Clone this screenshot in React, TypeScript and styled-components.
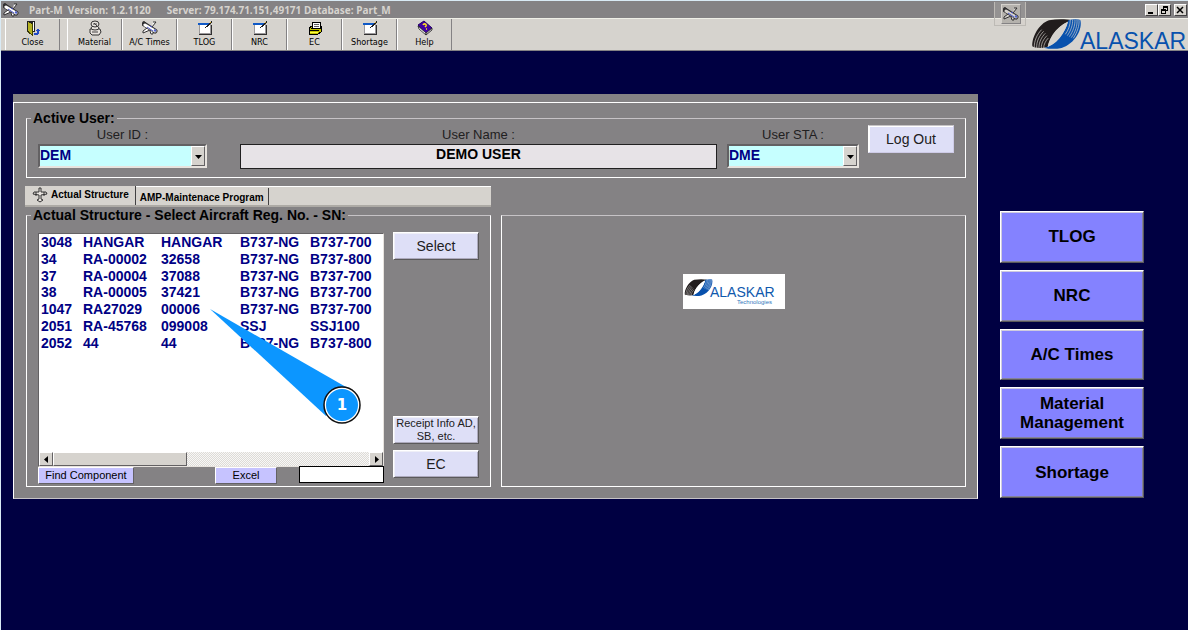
import React from "react";
import styled, { createGlobalStyle } from "styled-components";

const face = "#d6d3ce";
const grey = "#848284";
const navy = "#000042";
const sans = `"Liberation Sans", Arial, sans-serif`;
const ui = `"DejaVu Sans Condensed", Tahoma, sans-serif`;

const Global = createGlobalStyle`
  * { box-sizing: border-box; }
  html { background: ${navy}; }
  body { margin: 0; font-family: ${sans}; color: #000; }
  button, input, select { font-family: inherit; margin: 0; border-radius: 0; }
`;

const Page = styled.div`
  min-height: 100vh;
  background: ${navy};
  border-top: 1px solid #d9eaf5;
  border-left: 1px solid #d9eaf5;
`;

const TitleBar = styled.header`
  display: flex;
  align-items: center;
  height: 17px;
  padding-left: 2px;
  background: ${grey};
  color: ${face};
  font: bold 10px "Noto Sans", Tahoma, sans-serif;
  white-space: pre;
`;
const TitleText = styled.span`
  margin-left: 10px;
  flex: 1;
`;
const ServerText = styled.span`
  margin-left: 16px;
`;
const WinControls = styled.div`
  display: flex;
  margin-right: 1px;
`;
const WinButton = styled.button<{ $gap?: boolean }>`
  display: flex;
  padding: 0;
  width: 13px;
  height: 12px;
  margin-left: ${(p) => (p.$gap ? 3 : 0)}px;
  background: ${face};
  border: 1px solid;
  border-color: #fff #424142 #424142 #fff;
`;

const Toolbar = styled.nav`
  position: relative;
  display: flex;
  height: 33px;
  padding-left: 4px;
  background: ${face};
  border-top: 1px solid #efefe7;
  border-bottom: 1px solid ${grey};
`;
const ToolButton = styled.button<{ $last?: boolean }>`
  display: flex;
  flex-direction: column;
  align-items: center;
  width: 55px;
  padding: 1px 0 0 1px;
  margin-right: ${(p) => (p.$last ? 7 : 0)}px;
  background: none;
  border: 0;
  border-right: 1px solid ${grey};
  box-shadow: inset 1px 0 #fff;
  font: 9px/12px ${ui};
  white-space: nowrap;
`;
const ToolLogo = styled.div`
  margin-left: auto;
  height: 32px;
`;
const FloatingTool = styled.div`
  position: absolute;
  right: 162px;
  top: -17px;
  width: 32px;
  height: 24px;
  padding: 2px 5px 0 6px;
  background: rgba(214, 211, 206, 0.2);
  border: 1px solid #bdbab5;
  border-width: 0 1px 1px;
`;
const FloatingButton = styled.button`
  display: flex;
  padding: 1px;
  width: 20px;
  height: 20px;
  background: #b5b2ad;
  border: 1px solid;
  border-color: #d6d3ce #848284 #848284 #d6d3ce;
`;

const Workspace = styled.main`
  display: flex;
  align-items: flex-start;
  gap: 22px;
  padding: 43px 44px 0 12px;
`;
const Panel = styled.section`
  flex: 1;
  border-top: 8px solid ${grey};
  background: ${grey};
`;
const PanelBody = styled.div`
  border: 1px solid #fff;
  border-bottom-color: #c6c3c6;
  padding: 7px 11px 11px 12px;
  height: 397px;
`;
const Group = styled.fieldset`
  min-width: 0;
  margin: 0;
  border: 1px solid #fff;
  border-top-color: #c6c3c6;
  padding: 0;
`;
const Legend = styled.legend`
  margin-left: 4px;
  padding: 0 2px;
  font: bold 14px/16px ${sans};
`;
const UserGroup = styled(Group)`
  height: 68px;
`;
const UserRow = styled.div`
  display: flex;
  align-items: flex-start;
  padding: 0 11px;
`;
const Field = styled.div<{ $grow?: boolean; $left?: number; $width?: number }>`
  display: flex;
  flex-direction: column;
  ${(p) => (p.$grow ? "flex: 1;" : `width: ${p.$width}px;`)}
  margin-left: ${(p) => p.$left ?? 0}px;
`;
const FieldLabel = styled.label`
  font: 13px/18px ${sans};
  color: #212021;
  text-align: center;
`;
const ComboBox = styled.div`
  display: flex;
  position: relative;
  height: 24px;
  border: 2px solid;
  border-color: #636163 #e7e3de #e7e3de #636163;
`;
const Combo = styled.select`
  appearance: none;
  flex: 1;
  min-width: 0;
  border: 0;
  padding: 0 18px 2px 0;
  background: #c6ffff;
  color: #000084;
  font: bold 14px ${sans};
`;
const ComboArrow = styled.span`
  position: absolute;
  right: 0;
  top: 0;
  bottom: 0;
  width: 14px;
  display: grid;
  place-items: center;
  pointer-events: none;
  background: ${face};
  border: 1px solid;
  border-color: #fff #636163 #636163 #fff;
`;
const NameInput = styled.input`
  height: 25px;
  width: 100%;
  padding: 0 0 5px;
  text-align: center;
  background: #e7e3e7;
  border: 1px solid #212021;
  font: bold 14px ${sans};
`;

const PushButton = styled.button<{ $size?: number }>`
  width: 86px;
  height: 28px;
  padding: 0;
  background: #dedff7;
  border: 1px solid;
  border-color: #fff #5a595a #5a595a #fff;
  box-shadow: inset 1px 1px #efeff7, inset -1px -1px #adaabd;
  color: #212021;
  font: ${(p) => p.$size ?? 14}px/13px ${sans};
`;
const LogOut = styled(PushButton)`
  margin: -1px 0 0 9px;
  border-color: #c6c3c6 #cecbe7 #cecbe7 #fff;
  box-shadow: inset 1px 1px #fff;
`;

const Columns = styled.div`
  display: grid;
  grid-template-columns: 1fr 1fr;
  gap: 10px;
`;
const TabStrip = styled.div`
  display: flex;
  align-items: flex-end;
  height: 21px;
  margin: 8px 0 0 -1px;
  width: calc(50% - 4px);
  background: ${face};
  border-bottom: 2px solid #adaaa5;
  border-top: 1px solid #fff;
`;
const Tab = styled.button<{ $active?: boolean }>`
  display: flex;
  align-items: center;
  gap: 3px;
  height: ${(p) => (p.$active ? 19 : 17)}px;
  padding: ${(p) => (p.$active ? "0 6px 2px 7px" : "1px 4px 0 4px")};
  background: ${face};
  border: 0;
  border-right: 1px solid #424142;
  font: bold 10px ${sans};
  white-space: nowrap;
`;

const ListGroup = styled(Group)`
  height: 280px;
`;
const ListLayout = styled.div`
  display: flex;
  gap: 9px;
  height: 263px;
  padding: 10px 11px 8px;
`;
const ListColumn = styled.div`
  flex: 1;
  min-width: 0;
`;
const ListBox = styled.div`
  position: relative;
  display: flex;
  flex-direction: column;
  justify-content: space-between;
  height: 234px;
  background: #fff;
  border: 1px solid;
  border-color: #636163 #e7e3de #e7e3de #636163;
`;
const Table = styled.table`
  width: 100%;
  height: 117px;
  border-collapse: collapse;
  table-layout: fixed;
  color: #000084;
  font: bold 14px/16px ${sans};
  white-space: nowrap;
`;
const Cell = styled.td`
  padding: 0 0 0 2px;
`;
const ScrollBar = styled.div`
  display: flex;
  height: 14px;
  background: repeating-conic-gradient(#f7f7f7 0 25%, #dedbd6 0 50%) 0 0 / 2px 2px;
`;
const ScrollArrow = styled.button`
  display: grid;
  place-items: center;
  width: 14px;
  padding: 0;
  background: ${face};
  border: 1px solid;
  border-color: #fff #636163 #636163 #fff;
`;
const Thumb = styled.div`
  width: 134px;
  margin-right: auto;
  background: ${face};
  border: 1px solid;
  border-color: #fff #636163 #636163 #fff;
`;
const ListFooter = styled.div`
  display: flex;
  align-items: flex-start;
  gap: 22px;
`;
const SmallButton = styled.button<{ $width: number; $end?: boolean }>`
  width: ${(p) => p.$width}px;
  margin-left: ${(p) => (p.$end ? "auto" : "0")};
  height: 17px;
  padding: 0;
  background: #c6c3ff;
  border: 1px solid;
  border-color: #fff #636163 #636163 #fff;
  font: 11px/13px ${sans};
`;
const FindInput = styled.input`
  width: 85px;
  height: 17px;
  margin-top: -1px;
  border: 1px solid #000;
  background: #fff;
  font: 11px ${sans};
  z-index: 1;
`;
const SideButtons = styled.div`
  display: flex;
  flex-direction: column;
  gap: 6px;
  margin-top: -1px;
`;
const Spacer = styled.div`
  flex: 1;
`;
const PreviewGroup = styled(Group)`
  display: grid;
  place-items: center;
  margin-top: 8px;
  padding-bottom: 119px;
  height: 272px;
`;
const LogoCard = styled.div`
  width: 102px;
  height: 35px;
  background: #fff;
`;
const Callout = styled.svg`
  position: absolute;
  left: 171px;
  top: 75px;
  pointer-events: none;
`;

const SideNav = styled.nav`
  display: flex;
  flex-direction: column;
  gap: 7px;
  width: 144px;
  height: 287px;
  margin-top: 117px;
`;
const NavButton = styled.button`
  flex: 1;
  padding: 0 10px;
  background: #8482ff;
  border: 1px solid;
  border-color: #fff #5a595a #5a595a #fff;
  box-shadow: inset 1px 1px #cecbde, inset -1px -1px #84829c;
  font: bold 17px/19px ${sans};
`;

const Plane = ({ size = 16, body = "#fff" }: { size?: number; body?: string }) => (
  <svg width={size} height={size} viewBox="0 0 16 16" fill="none" aria-hidden="true">
    <path d="M11 2h3l-4 5M5 8l-4 3v2l7-3M1 2l2 0 3 3M2 5L1 3" stroke="#313031" strokeWidth="1" fill={body} />
    <path d="M2 4L13 11" stroke="#313031" strokeWidth="5" strokeLinecap="round" />
    <path d="M3 5L13 11" stroke={body} strokeWidth="3" strokeLinecap="round" />
    <path d="M5 7l6 4M8 6l2 1" stroke="#4a55c6" />
    <path d="M8 11l1 3h2l0-2" fill={body} stroke="#313031" />
    <path d="M12 10l2 1" stroke="#5265ce" strokeWidth="2" />
  </svg>
);
const Door = () => (
  <svg width="16" height="16" viewBox="0 0 16 16" shapeRendering="crispEdges" aria-hidden="true">
    <path d="M2 1h8v11H2z" fill="#212021" />
    <path d="M8 2h1v9H8z" fill="#fff" />
    <path d="M3 2l4 2v10l-4-3z" fill="#b5b221" />
    <path d="M7 3v12L2 11" fill="none" stroke="#424100" />
    <path d="M9 14v-1h3v-2h-2l3-2 2 2h-1v3l-2 1H9z" fill="#2149c6" />
  </svg>
);
const Parts = () => (
  <svg width="16" height="16" viewBox="0 0 16 16" aria-hidden="true">
    <g fill="#e7e3de" stroke="#313031">
      <path d="M3 9h10l1 3-2 3H5l-2-2z" />
      <ellipse cx="8" cy="8" rx="4" ry="2" />
      <ellipse cx="8" cy="4" rx="4" ry="3" />
    </g>
    <path d="M6 4h4M5 12h6M7 3l3 3" stroke="#424142" />
  </svg>
);
const Note = () => (
  <svg width="16" height="16" viewBox="0 0 16 16" shapeRendering="crispEdges" aria-hidden="true">
    <path d="M2 4h11v9H2z" fill="#fff" stroke="#9c9a9c" />
    <path d="M1 3h12v2H1z" fill="#1059c6" />
    <path d="M14 5v9H2" fill="none" stroke="#313031" />
    <path d="M8 8l1-2 5-5 1 1-5 5z" fill="#212021" />
    <path d="M13 3l1-1" stroke="#c6a221" />
  </svg>
);
const Printer = () => (
  <svg width="16" height="16" viewBox="0 0 16 16" shapeRendering="crispEdges" aria-hidden="true">
    <path d="M2 8l3-2h9v6l-3 2H2z" fill="#c6c300" stroke="#000" />
    <path d="M5 8l1-6h7v6z" fill="#fff" stroke="#000" />
    <path d="M7 4h5M7 6h5" stroke="#636163" />
    <path d="M2 10h10" stroke="#000" />
    <path d="M3 12h8" stroke="#ffff42" />
  </svg>
);
const Book = () => (
  <svg width="16" height="16" viewBox="0 0 16 16" aria-hidden="true">
    <path d="M1 5l6-4 8 7-6 6z" fill="#4200a5" stroke="#210063" />
    <path d="M1 6l8 7v2L2 9z" fill="#fff" stroke="#212021" strokeWidth=".8" />
    <path d="M9 13l6-5v2l-6 5z" fill="#c6c3c6" stroke="#212021" strokeWidth=".8" />
    <path d="M6 5c1-2 4-1 3 1l-1 1M9 9h1" fill="none" stroke="#ffe321" strokeWidth="1.500" />
  </svg>
);
const CrossPlane = () => (
  <svg width="16" height="16" viewBox="0 0 16 16" aria-hidden="true">
    <path d="M7 1h2v4h5l1 2-6 1v4l2 1-3 2-3-2 2-1V8L1 7l1-2h5z" fill="#e7e3de" stroke="#313031" />
    <path d="M4 5v4M12 5v4" stroke="#313031" />
  </svg>
);
const Triangle = ({ dir }: { dir: "left" | "right" | "down" }) => (
  <svg width="7" height="7" viewBox="0 0 7 7" aria-hidden="true">
    <path d={{ left: "M5 0v7L1 3.500z", right: "M2 0v7l4-3.500z", down: "M0 2h7L3.500 6z" }[dir]} />
  </svg>
);

const Swirl = ({ hole }: { hole: string }) => (
  <g>
    <path d="M4 82C2 55 24 14 54 4C78 0 104 0 122 4C86 14 56 50 50 84C32 88 12 88 4 82Z" fill="#211c1c" />
    <path d="M148 3C156 30 132 74 92 87C74 91 54 90 40 87C76 80 102 44 112 4C126 0 140 0 148 3Z" fill="#0851ad" />
    <path d="M50 84C54 60 76 24 111 8C104 38 80 68 50 84Z" fill={hole} />
    <g fill="none" stroke={hole} strokeWidth="2">
      <path d="M10 86C9 66 18 46 32 32" />
      <path d="M17 87C16 68 25 50 38 37" />
      <path d="M24 88C23 70 32 54 43 43" />
      <path d="M31 88C30 73 38 60 48 50" />
      <path d="M38 88C38 76 44 66 52 57" />
      <path d="M118 3C118 18 112 34 103 46" />
      <path d="M125 2C126 18 119 36 109 50" />
      <path d="M132 2C133 18 126 38 115 53" />
      <path d="M138 2C140 18 133 40 121 56" />
      <path d="M144 3C146 18 139 40 127 58" />
    </g>
  </g>
);
const BigLogo = () => (
  <svg width="157" height="32" viewBox="0 0 157 32" overflow="visible" role="img" aria-label="Alaskar">
    <g transform="scale(.333)"><Swirl hole={face} /></g>
    <text x="49" y="30" fontFamily="Liberation Sans, Arial, sans-serif" fontSize="23" fill="#0851ad">ALASKAR</text>
  </svg>
);
const SmallLogo = () => (
  <svg width="102" height="35" viewBox="0 0 102 35" role="img" aria-label="Alaskar Technologies">
    <g transform="translate(1 5) scale(.19)"><Swirl hole="#fff" /></g>
    <text x="27" y="23" fontFamily="Liberation Sans, Arial, sans-serif" fontSize="14" fill="#1059ad">ALASKAR</text>
    <text x="54" y="30" fontFamily="Liberation Sans, Arial, sans-serif" fontSize="6" fill="#3179bd">Technologies</text>
  </svg>
);

const tools: [string, React.ReactNode][] = [
  ["Close", <Door />],
  ["Material", <Parts />],
  ["A/C Times", <Plane />],
  ["TLOG", <Note />],
  ["NRC", <Note />],
  ["EC", <Printer />],
  ["Shortage", <Note />],
  ["Help", <Book />],
];
const aircraft = [
  ["3048", "HANGAR", "HANGAR", "B737-NG", "B737-700"],
  ["34", "RA-00002", "32658", "B737-NG", "B737-800"],
  ["37", "RA-00004", "37088", "B737-NG", "B737-700"],
  ["38", "RA-00005", "37421", "B737-NG", "B737-700"],
  ["1047", "RA27029", "00006", "B737-NG", "B737-700"],
  ["2051", "RA-45768", "099008", "SSJ", "SSJ100"],
  ["2052", "44", "44", "B737-NG", "B737-800"],
];
const sections = ["TLOG", "NRC", "A/C Times", "Material Management", "Shortage"];

const ComboField = ({ id, value }: { id: string; value: string }) => (
  <ComboBox>
    <Combo id={id} defaultValue={value}>
      <option>{value}</option>
    </Combo>
    <ComboArrow><Triangle dir="down" /></ComboArrow>
  </ComboBox>
);

export default function App() {
  return (
    <Page>
      <Global />
      <TitleBar>
        <Plane />
        <TitleText>
          Part-M  Version: 1.2.1120
          <ServerText>Server: 79.174.71.151,49171 Database: Part_M</ServerText>
        </TitleText>
        <WinControls>
          <WinButton aria-label="Minimize">
            <svg width="11" height="10"><path d="M2 7h5v2H2z" /></svg>
          </WinButton>
          <WinButton aria-label="Restore">
            <svg width="11" height="10" shapeRendering="crispEdges">
              <path d="M4 1h5v5H7v3H2V4h2zM5 3v1h2v1h1V3zM3 6v2h3V6z" fillRule="evenodd" />
            </svg>
          </WinButton>
          <WinButton aria-label="Close window" $gap>
            <svg width="11" height="10"><path d="M2 2l6 6M8 2L2 8" stroke="#000" strokeWidth="1.500" /></svg>
          </WinButton>
        </WinControls>
      </TitleBar>
      <Toolbar>
        {tools.map(([label, icon], i) => (
          <ToolButton key={label} $last={i === 0}>
            {icon}
            {label}
          </ToolButton>
        ))}
        <ToolLogo><BigLogo /></ToolLogo>
        <FloatingTool>
          <FloatingButton aria-label="Aircraft"><Plane body="#d6d3ce" /></FloatingButton>
        </FloatingTool>
      </Toolbar>
      <Workspace>
        <Panel>
          <PanelBody>
            <UserGroup>
              <Legend>Active User:</Legend>
              <UserRow>
                <Field $width={169}>
                  <FieldLabel htmlFor="uid">User ID :</FieldLabel>
                  <ComboField id="uid" value="DEM" />
                </Field>
                <Field $grow $left={33}>
                  <FieldLabel htmlFor="uname">User Name :</FieldLabel>
                  <NameInput id="uname" readOnly value="DEMO USER" />
                </Field>
                <Field $width={132} $left={10}>
                  <FieldLabel htmlFor="usta">User STA :</FieldLabel>
                  <ComboField id="usta" value="DME" />
                </Field>
                <LogOut>Log Out</LogOut>
              </UserRow>
            </UserGroup>
            <TabStrip role="tablist">
              <Tab role="tab" aria-selected $active><CrossPlane />Actual Structure</Tab>
              <Tab role="tab" aria-selected={false}>AMP-Maintenace Program</Tab>
            </TabStrip>
            <Columns>
              <ListGroup>
                <Legend>Actual Structure - Select Aircraft Reg. No. - SN:</Legend>
                <ListLayout>
                  <ListColumn>
                    <ListBox>
                      <Table>
                        <colgroup>
                          <col style={{ width: 42 }} />
                          <col style={{ width: 78 }} />
                          <col style={{ width: 79 }} />
                          <col style={{ width: 70 }} />
                          <col />
                        </colgroup>
                        <tbody>
                          {aircraft.map((row) => (
                            <tr key={row[0]}>
                              {row.map((value, i) => <Cell key={i}>{value}</Cell>)}
                            </tr>
                          ))}
                        </tbody>
                      </Table>
                      <ScrollBar>
                        <ScrollArrow aria-label="Scroll left"><Triangle dir="left" /></ScrollArrow>
                        <Thumb />
                        <ScrollArrow aria-label="Scroll right"><Triangle dir="right" /></ScrollArrow>
                      </ScrollBar>
                      <Callout width="156" height="120" viewBox="0 0 156 120">
                        <path d="M0 0L136 78L116 107Z" fill="#0c96ff" />
                        <circle cx="132" cy="96" r="17" fill="#0c96ff" stroke="#fff" strokeWidth="2" />
                        <circle cx="132" cy="96" r="18" fill="none" stroke="#101010" strokeWidth="1.500" />
                        <text x="132" y="101" textAnchor="middle" fontFamily="DejaVu Sans, sans-serif" fontWeight="bold" fontSize="15" fill="#fff">1</text>
                      </Callout>
                    </ListBox>
                    <ListFooter>
                      <SmallButton $width={96}>Find Component</SmallButton>
                      <SmallButton $width={62} $end>Excel</SmallButton>
                      <FindInput aria-label="Find component" />
                    </ListFooter>
                  </ListColumn>
                  <SideButtons>
                    <PushButton>Select</PushButton>
                    <Spacer />
                    <PushButton $size={11}>Receipt Info AD, SB, etc.</PushButton>
                    <PushButton>EC</PushButton>
                  </SideButtons>
                </ListLayout>
              </ListGroup>
              <PreviewGroup>
                <LogoCard><SmallLogo /></LogoCard>
              </PreviewGroup>
            </Columns>
          </PanelBody>
        </Panel>
        <SideNav>
          {sections.map((name) => <NavButton key={name}>{name}</NavButton>)}
        </SideNav>
      </Workspace>
    </Page>
  );
}
